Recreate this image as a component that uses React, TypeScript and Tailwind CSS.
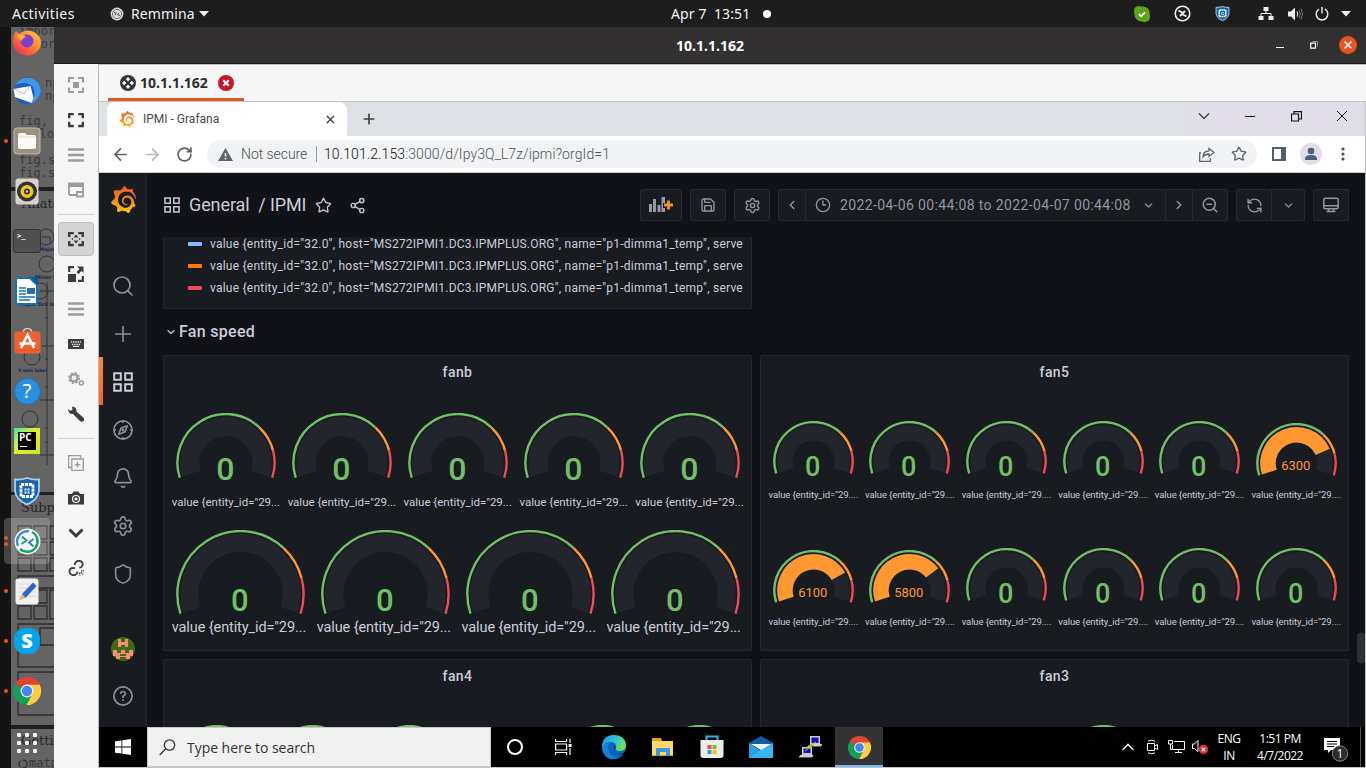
import React from "react";
import type { ReactNode } from "react";
import {
  ArrowLeft, ArrowRight, RotateCw, X, Plus, Search, Bell, Settings, Shield,
  Star, Share2, Save, ChevronLeft, ChevronRight, ChevronDown, ZoomOut, RefreshCw, Clock3,
} from "lucide-react";
import { SiGrafana } from "react-icons/si";

/* ---------- shared drawings ---------- */

function GrafanaMark({ size, id }: { size: number; id: string }) {
  return (
    <span className="relative block" style={{ width: size, height: size }}>
      <svg width="0" height="0" className="absolute">
        <defs>
          <linearGradient id={id} x1="0" y1="0" x2="0" y2="1">
            <stop offset="0" stopColor="#f05a28" />
            <stop offset="0.45" stopColor="#f58020" />
            <stop offset="1" stopColor="#fbca0a" />
          </linearGradient>
        </defs>
      </svg>
      <SiGrafana size={size} style={{ fill: `url(#${id})` }} />
    </span>
  );
}

function ChromeLogo({ size }: { size: number }) {
  return (
    <svg width={size} height={size} viewBox="0 0 48 48">
      <path d="M24 24 L3.2 12 A24 24 0 0 1 44.8 12 Z" fill="#dd4437" />
      <path d="M24 24 L44.8 12 A24 24 0 0 1 24 48 Z" fill="#ffcd40" />
      <path d="M24 24 L24 48 A24 24 0 0 1 3.2 12 Z" fill="#169d58" />
      <path d="M24 13 H45.3 L44 18 L33.5 29.5 Z" fill="#ffcd40" />
      <path d="M24 13 H45.3 A24 24 0 0 0 24 0 Z" fill="#dd4437" />
      <path d="M33.5 29.5 L23.5 48 L17 40 L24 34 Z" fill="#169d58" />
      <path d="M33.5 29.5 L23.5 48 H30 L40 36 Z" fill="#ffcd40" />
      <path d="M14.5 29.5 L3.8 11 L12 8 L15 20 Z" fill="#169d58" />
      <path d="M14.4 18.6 L3.8 11.2 L8 6 L24 13 Z" fill="#dd4437" />
      <circle cx="24" cy="24" r="11" fill="#f1f1f1" />
      <circle cx="24" cy="24" r="8.8" fill="#4285f4" />
    </svg>
  );
}

function ShieldLogo({ size }: { size: number }) {
  return (
    <svg width={size} height={size} viewBox="0 0 28 28">
      <path d="M2 2.5 Q8 3 14 1 Q20 3 26 2.5 V14 Q25 23 14 27.5 Q3 23 2 14 Z" fill="#1766ad" stroke="#a9d3f2" strokeWidth="1.8" />
      <path d="M8 7.500h12v12H8z" fill="none" stroke="#fff" strokeWidth="2.800" strokeDasharray="3.200 0.800" />
      <path d="M11.500 11.500h2v2h-2zM14.500 11.500h2v2h-2zM11.500 14.500h2v2h-2zM14.500 14.500h2v2h-2z" fill="#e6f2fb" />
    </svg>
  );
}

/* ---------- top bar ---------- */

function TopBar() {
  return (
    <header className="flex h-[27px] shrink-0 items-center bg-[#1d1d1d] font-['Noto_Sans',sans-serif] text-[14px] text-[#f2f2f2]">
      <span className="w-[97px] pl-3 tracking-[0.45px]">Activities</span>
      <svg className="ml-[13px]" width="14" height="14" viewBox="0 0 14 14">
        <circle cx="7" cy="7" r="6.4" fill="#d9d9d9" />
        <circle cx="7" cy="7" r="4.6" fill="none" stroke="#777" />
        <path d="M4 5.2l2.2 1L5 8M10 8.8l-2.2-1L9 6" fill="none" stroke="#666" strokeWidth="1.1" />
      </svg>
      <span className="ml-[7px] w-[68px] tracking-[0.1px]">Remmina</span>
      <svg width="10" height="6" viewBox="0 0 10 6"><path d="M0 0h10L5 5.5z" fill="#f2f2f2" /></svg>
      <span className="ml-[462px] w-[92px] whitespace-pre tracking-[0.1px]">Apr 7  13:51</span>
      <span className="h-2 w-2 rounded-full bg-white" />
      <div className="ml-[351px] flex items-center">
        <span className="flex w-10 justify-center">
          <svg width="16" height="16" viewBox="0 0 16 16">
            <path d="M4.5 0Q7 .5 9 .5 15.5 1 15.5 7.5 16 9 16 11.5 15.500 15.500 11 16 9 15.500 7 15.500 1 14.500.5 8.500 0 6.500 0 4 .5.5 4.500 0z" fill="#5ea51b" />
            <path d="M5 8.200l2.200 2.100 3.800-4" fill="none" stroke="#fff" strokeWidth="1.800" />
          </svg>
        </span>
        <span className="flex w-10 justify-center">
          <svg width="17" height="17" viewBox="0 0 17 17">
            <circle cx="8.500" cy="8.500" r="7.300" fill="none" stroke="#eee" strokeWidth="1.600" />
            <path d="M4.500 5.500l4.500 2.500-3 3M12.500 11.500L8 9l3-3" fill="none" stroke="#eee" strokeWidth="1.900" />
          </svg>
        </span>
        <span className="flex w-10 justify-center"><ShieldLogo size={15} /></span>
        <span className="flex w-[48px] justify-center">
          <svg width="16" height="14" viewBox="0 0 16 14" fill="#eee">
            <path d="M5.500 0h5v4h-5zM.5 9h5v4h-5zM10.500 9h5v4h-5z" />
            <path d="M8 4v3M3 9V6.500h10V9" fill="none" stroke="#eee" />
          </svg>
        </span>
        <svg className="ml-[-2px]" width="15" height="14" viewBox="0 0 15 14">
          <path d="M0 4.500h3L7 .5v13l-4-4H0z" fill="#eee" />
          <path d="M9 4.500q1.500 2.500 0 5" fill="none" stroke="#ccc" strokeWidth="1.300" />
          <path d="M11 3q2.500 4 0 8M13 1.500q3 5.500 0 11" fill="none" stroke="#777" />
        </svg>
        <svg className="ml-3" width="14" height="14" viewBox="0 0 14 14">
          <path d="M4 2.200a5.800 5.800 0 1 0 6 0M7 0v6.500" fill="none" stroke="#eee" strokeWidth="1.400" />
        </svg>
        <svg className="ml-3" width="10" height="6" viewBox="0 0 10 6"><path d="M0 0h10L5 5.500z" fill="#eee" /></svg>
      </div>
    </header>
  );
}

/* ---------- dock ---------- */

function DockBackdrop() {
  return (
    <svg className="absolute inset-y-0 left-[11px]" width="43" height="741" viewBox="11 27 43 741">
      <rect x="11" y="27" width="43" height="741" fill="#646464" />
      <rect x="11" y="187" width="43" height="4" fill="#202020" />
      <rect x="11" y="492" width="43" height="3" fill="#202020" />
      <rect x="11" y="725" width="43" height="4" fill="#202020" />
      <g fill="#3a3a3a" fontFamily="DejaVu Sans Mono, monospace" fontSize="12">
        <text x="19" y="35">import</text>
        <text x="19" y="48">import</text>
        <text x="45" y="87">np</text>
        <text x="45" y="100">np</text>
        <text x="19" y="125">fig, a</text>
        <text x="25" y="138">.plo</text>
        <text x="19" y="164">fig.sa</text>
        <text x="19" y="177">fig.sh</text>
        <text x="29" y="767">matp</text>
      </g>
      <g fill="#262626" fontFamily="DejaVu Serif, serif" fontSize="13">
        <text x="22" y="208">Anato</text>
        <text x="21" y="512">Subpl</text>
        <text x="21" y="745">Gettin</text>
      </g>
      <g fill="#22225a" fontFamily="DejaVu Sans, sans-serif" fontSize="5" fontWeight="bold">
        <text x="39" y="251">Major t</text>
        <text x="35" y="279">Minor ti</text>
        <text x="20" y="306">Major tick lab</text>
        <text x="18" y="372" fontSize="4.500">Y axis label</text>
      </g>
      <g fill="none" stroke="#333">
        <circle cx="46" cy="237" r="8" /><circle cx="47" cy="264" r="8" /><circle cx="40" cy="291" r="8" />
        <circle cx="32" cy="357" r="8" /><circle cx="30" cy="419" r="8" />
        <path d="M47 282v183M45 318h3M42 346h12M45 359h3M40 400h14M45 387h3M45 428h3M45 442h3M40 455h14M40 291h14M42 237h8v6" />
      </g>
      <g fill="none" stroke="#2d2d2d" strokeWidth="1.300">
        <path d="M18 526h13v13H18zM34 526h13v13H34zM50 526h13v13H50zM18 542h13v13H18zM34 542h13v13H34zM50 542h13v13H50zM18 558h13v13H18zM34 558h13v13H34zM50 558h13v13H50z" />
        <path d="M18 576h40v12H18zM18 590h13v13H18zM34 590h13v13H34zM18 606h13v13H18zM34 606h13v13H34zM50 590h13v29H50z" />
        <path d="M18 624h40v43H18zM40 628h20v17H40zM18 672h40v43H18z" />
        <circle cx="23" cy="764" r="4" strokeDasharray="7 2" />
      </g>
    </svg>
  );
}

const dockIcons: { dots: number; art: ReactNode }[] = [
  {
    dots: 0, art: (
      <svg width="30" height="30" viewBox="0 0 30 30">
        <defs><linearGradient id="ff" x1="1" y1="0" x2="0" y2="1"><stop offset="0" stopColor="#ffd63a" /><stop offset=".5" stopColor="#ff7a2e" /><stop offset="1" stopColor="#f0186c" /></linearGradient></defs>
        <path d="M4 5l3 3q7-6 15-2 7 4 7 11A14 13 0 0 1 1 16Q1 9 4 5z" fill="url(#ff)" />
        <circle cx="15" cy="15" r="6.500" fill="#7a3fd0" />
        <path d="M5 8q6 0 9 3-4 1-4 4l-4-3z" fill="#ffb02e" />
      </svg>
    ),
  },
  {
    dots: 0, art: (
      <svg width="30" height="30" viewBox="0 0 30 30">
        <circle cx="15.500" cy="15" r="13.500" fill="#1a5fc0" />
        <path d="M3 9Q9 0 19 2q9 3 10 13-2 10-10 13 6-11 2-17Q15 4 3 9z" fill="#3d96e8" />
        <path d="M1.500 13l17-3 3 12-2 5L3 21z" fill="#fafafa" /><path d="M2 13l10 5 6-8" fill="none" stroke="#c4c4c4" />
      </svg>
    ),
  },
  {
    dots: 1, art: (
      <svg width="28" height="28" viewBox="0 0 28 28">
        <rect x="1" y="1" width="26" height="26" rx="3" fill="#9a917f" stroke="#c4bcae" />
        <path d="M5 8q0-2 2-2h5l2 2h7q2 0 2 2v10q0 2-2 2H7q-2 0-2-2z" fill="#fbfaf8" /><path d="M5 10h18" stroke="#ddd" />
      </svg>
    ),
  },
  {
    dots: 0, art: (
      <svg width="24" height="27" viewBox="0 0 24 27">
        <rect x=".5" y=".5" width="23" height="26" rx="3" fill="#d6d3cd" />
        <circle cx="12" cy="13.500" r="10" fill="#333" /><circle cx="12" cy="13.500" r="6.500" fill="#f6c51c" /><circle cx="12" cy="13.500" r="3" fill="#333" /><circle cx="12" cy="13.500" r="1.200" fill="#ccc" />
      </svg>
    ),
  },
  {
    dots: 0, art: (
      <span className="flex h-[24px] w-[28px] rounded-[3px] border border-[#353535] bg-[#505050] pl-[3px] pt-[2px] font-['DejaVu_Sans_Mono',monospace] text-[7px] font-bold leading-[8px] text-white">&gt;_</span>
    ),
  },
  {
    dots: 0, art: (
      <svg width="24" height="28" viewBox="0 0 24 28">
        <path d="M2.500 1H15l7 7v17.500q0 1.500-1.500 1.500h-18Q1 27 1 25.500v-23Q1 1 2.500 1z" fill="#fff" stroke="#1173b6" strokeWidth="2" /><path d="M15 0h8v8z" fill="#0b5b92" />
        <path d="M4 11h7M4 14h7M4 17h7M4 20h16M4 23h11" stroke="#1173b6" strokeWidth="1.400" /><path d="M12 11h8v6h-8z" fill="#2b6d9e" />
      </svg>
    ),
  },
  {
    dots: 0, art: (
      <svg width="27" height="28" viewBox="0 0 27 28">
        <path d="M9 7q0-5.500 4.500-5.500T18 7" fill="none" stroke="#e0cfa8" strokeWidth="1.500" />
        <rect x=".5" y="4.500" width="26" height="22" rx="2.500" fill="#ef6230" /><path d="M1 23h25" stroke="#d94f20" />
        <path d="M7 21l6.500-13L20 21M5.500 16.500h16" fill="none" stroke="#fff" strokeWidth="2.600" />
      </svg>
    ),
  },
  {
    dots: 0, art: (
      <span className="flex h-[27px] w-[27px] items-center justify-center rounded-full border border-[#1d74b8] bg-[#2a8fdc] font-['Noto_Sans',sans-serif] text-[20px] leading-none text-white">?</span>
    ),
  },
  {
    dots: 0, art: (
      <span className="flex h-[26px] w-[26px] bg-gradient-to-br from-[#21e88d] via-[#e9ee22] to-[#c5e32b] p-[4px]">
        <span className="flex h-[18px] w-[18px] flex-col bg-black font-['Open_Sans',sans-serif] text-[10px] font-bold leading-[11px] text-white">
          <span className="pl-px">PC</span><span className="ml-[2px] mt-[3px] h-px w-[7px] bg-white" />
        </span>
      </span>
    ),
  },
  { dots: 0, art: <ShieldLogo size={28} /> },
  {
    dots: 2, art: (
      <svg width="27" height="27" viewBox="0 0 27 27">
        <circle cx="13.500" cy="13.500" r="13" fill="#f6f6f4" />
        <path d="M4 18A10.500 10.500 0 0 1 15 3.300" fill="none" stroke="#3e8ed8" strokeWidth="2.500" />
        <path d="M18 4A10.500 10.500 0 1 1 6 21" fill="none" stroke="#1aa06d" strokeWidth="2.500" />
        <path d="M8 8.500l4.500 4-5 3.500" fill="none" stroke="#1aa06d" strokeWidth="2" /><path d="M19.500 11l-4.500 3.500 4.500 4" fill="none" stroke="#3e7ed0" strokeWidth="2" />
      </svg>
    ),
  },
  {
    dots: 1, art: (
      <svg width="24" height="27" viewBox="0 0 24 27">
        <rect x=".5" y=".5" width="23" height="26" rx="3" fill="#f1f1f1" /><path d="M3 6h18M3 10h18M3 14h18M3 18h18" stroke="#d8d8d8" />
        <path d="M7 16L18 4.500l3.500 3.500L10.500 20z" fill="#2f62d0" /><path d="M7 16l3.500 4L4 22.500z" fill="#e7b07a" />
      </svg>
    ),
  },
  {
    dots: 1, art: (
      <span className="flex h-[26px] w-[26px] items-center justify-center rounded-[11px] bg-[#00a5ea] font-['Open_Sans',sans-serif] text-[20px] font-extrabold leading-none text-white">S</span>
    ),
  },
  { dots: 1, art: <ChromeLogo size={28} /> },
];

function Dock() {
  return (
    <aside className="relative h-[741px] w-[54px] shrink-0 overflow-hidden bg-[#141414]">
      <DockBackdrop />
      <div className="relative mt-[-11px] flex flex-col">
        {dockIcons.map((d, i) => (
          <div key={i} className="flex h-[50px] items-center">
            <div className={d.dots === 2 ? "ml-[4px] flex h-[46px] w-[46px] items-center rounded-[4px] bg-white/20" : "ml-[4px] flex h-[46px] w-[46px] items-center"}>
              <span className="flex w-[5px] flex-col items-end gap-[2px]">
                {Array.from({ length: d.dots }, (_, k) => <i key={k} className="mr-[1px] h-1 w-1 rounded-full bg-[#e95420]" />)}
              </span>
              <span className="flex w-[36px] justify-center">{d.art}</span>
            </div>
          </div>
        ))}
        <div className="ml-[17px] mt-[17px] grid w-5 grid-cols-3 gap-[4px]">
          {Array.from({ length: 9 }, (_, k) => <i key={k} className="h-[4px] w-[4px] rounded-[1px] bg-[#f2f2f2]" />)}
        </div>
      </div>
    </aside>
  );
}

/* ---------- Remmina toolbar ---------- */

const D = "#3c3c3c";
const G = "#9c9c9c";
const lines = <path d="M0 2.500h16M0 8h16M0 13.500h16" stroke={G} strokeWidth="2.400" fill="none" />;

const toolArt: (ReactNode | null)[] = [
  <><path d="M1 5.500V1h5M10 1h5v4.500M15 10.500V15h-5M6 15H1v-4.500" fill="none" stroke={G} strokeWidth="2.200" /><path d="M5 5h6v6H5z" fill={G} /></>,
  <path d="M1.200 6.300V2.200h4.600M10.200 2.200h4.600v4.100M14.800 9.700V14h-4.600M5.800 14H1.200V9.700" fill="none" stroke={D} strokeWidth="2.300" />,
  lines,
  <><path d="M1 13V1.500h14V9M1 13h7" fill="none" stroke={G} strokeWidth="1.800" /><path d="M0 1h16v4H0z" fill={G} /><path d="M9 10h6v4.500H9z" fill="none" stroke={G} strokeWidth="1.800" /></>,
  null,
  <><path d="M1.200 6V2.200h4.600M10.200 2.200h4.600V6M14.800 10v4h-4.600M5.800 14H1.200v-4" fill="none" stroke={D} strokeWidth="2.300" /><path d="M8 3.500L10.500 6.500h-5zM8 12.500l2.500-3h-5zM3.500 8L5 6.700v2.600zM12.500 8L11 6.700v2.600z" fill={D} /></>,
  <><path d="M1.200 6V1.200H6M14.800 10v4.800H10" fill="none" stroke={D} strokeWidth="2.200" /><path d="M0 8h8v8H0zM9 .5h6.500V7l-2-2-3 3-2-2 3-3z" fill={D} /></>,
  lines,
  <><path d="M0 3h16v10H0z" fill={D} /><path d="M3 6h10M4 8.500h8" stroke="#eee" strokeWidth="1.300" strokeDasharray="1.300 .9" /><path d="M5 10.500h6" stroke="#eee" /></>,
  <><circle cx="6" cy="7" r="3.600" fill="none" stroke={G} strokeWidth="2.400" /><circle cx="6" cy="7" r="5.300" fill="none" stroke={G} strokeWidth="1.400" strokeDasharray="2.200 1.960" /><circle cx="13.300" cy="12" r="2" fill="none" stroke={G} strokeWidth="1.500" /></>,
  <path d="M4 .6l.6 3-2.300 1.500L0 3q0 5 5 5l7 7q2 1.500 3.500 0t0-3.300l-7-6Q9 1 4 .6z" fill={D} />,
  null,
  <><path d="M3 12.500H.6V.7h12V3" fill="none" stroke={G} strokeWidth="1.300" /><path d="M3.800 4h11.500v11.300H3.800z" fill="none" stroke={G} strokeWidth="1.300" /><path d="M9.500 6.800v5.600M6.700 9.600h5.600" stroke={G} strokeWidth="1.400" /></>,
  <><path d="M0 4h4l1.500-2.500h5L12 4h4v10.500H0z" fill={D} /><circle cx="8" cy="9" r="3.500" fill="none" stroke="#f6f6f6" strokeWidth="1.200" /><circle cx="8" cy="9" r="1.600" fill="#f6f6f6" /></>,
  <path d="M1.500 4.500L8 11l6.500-6.500" fill="none" stroke={D} strokeWidth="3" />,
  <><path d="M7 5q-.5-2 1.500-3.500Q11 0 13.500 1.700q2.200 2.500.3 4.800-1 1.200-2.500 1.200M9.500 11.500q-.3 2.500-2.300 3.300-2.500 1-4.700-.8-2-2.500-.2-5Q4.500 7.300 7 8.500" fill="none" stroke={D} strokeWidth="1.800" /><path d="M11.500 12.500l.4 3M13 10.800h3M12.800 12.300l2.400 2.200" stroke={D} strokeWidth="1.200" strokeDasharray="1.500 .6" /></>,
];

function RemminaTools() {
  return (
    <aside className="flex w-[45px] shrink-0 flex-col border-r border-[#b9b9b9] bg-[#f6f6f6] pt-[3px]">
      {toolArt.map((a, i) =>
        a === null ? (
          <div key={i} className="mx-1 flex h-[14px] items-center"><span className="h-px w-full bg-[#d3d3d3]" /></div>
        ) : (
          <div key={i} className="flex h-[35px] items-center justify-center">
            <span className={i === 5 ? "flex h-[34px] w-[36px] items-center justify-center rounded-[4px] border border-[#bdbdbd] bg-[#d4d4d4]" : "flex h-[34px] w-[36px] items-center justify-center"}>
              <svg width="16" height="16" viewBox="0 0 16 16">{a}</svg>
            </span>
          </div>
        )
      )}
    </aside>
  );
}

/* ---------- browser ---------- */

function ChromeFrame() {
  return (
    <>
      <div className="flex h-[34px] shrink-0 bg-[#dee1e6]">
        <div className="ml-2 flex w-[240px] items-center rounded-t-[8px] bg-white pl-[12px] font-[Roboto,sans-serif] text-[12px] text-[#45494d]">
          <GrafanaMark size={16} id="gt" />
          <span className="ml-2 w-[181px] tracking-[0px]">IPMI - Grafana</span>
          <X size={13} strokeWidth={2.600} />
        </div>
        <div className="ml-[14px] flex items-center text-[#3c4043]"><Plus size={16} strokeWidth={2.500} /></div>
        <div className="ml-auto flex w-[178px] items-center bg-[#e1dee9] pb-[6px] text-black">
          <svg className="ml-[11px]" width="12" height="7" viewBox="0 0 12 7"><path d="M1 .5l5 5 5-5" fill="none" stroke="#333" strokeWidth="1.200" /></svg>
          <span className="ml-[35px] h-px w-[10px] bg-black" />
          <svg className="ml-[36px]" width="11" height="11" viewBox="0 0 11 11"><path d="M.5 3h7v7h-7zM3 3V.7h7.500V8H8" fill="none" stroke="#111" strokeWidth="1.200" /></svg>
          <svg className="ml-[34px]" width="12" height="12" viewBox="0 0 12 12"><path d="M1 1l10 10M11 1L1 11" stroke="#111" /></svg>
        </div>
      </div>
      <div className="flex h-[37px] shrink-0 items-center border-b border-[#cfd1d4] bg-white text-[#5f6368]">
        <ArrowLeft className="ml-[12px]" size={19} strokeWidth={2.200} />
        <ArrowRight className="ml-[13px] text-[#b6b8bb]" size={19} strokeWidth={2.200} />
        <RotateCw className="ml-[14px]" size={17} strokeWidth={2.500} />
        <div className="ml-[14px] flex h-[28px] w-[1050px] items-center rounded-full bg-[#f1f3f4] pl-[11px] font-[Roboto,sans-serif] text-[14px]">
          <svg width="15" height="13" viewBox="0 0 15 13"><path d="M7.500 0L15 13H0z" fill="#5f6368" /><path d="M7.500 5v3.500M7.500 10v1.500" stroke="#fff" strokeWidth="1.600" /></svg>
          <span className="ml-[8px] w-[74px] whitespace-nowrap font-light tracking-[-0.05px] text-[#4b4f54]">Not secure</span>
          <span className="ml-[1px] h-4 w-px bg-[#9a9da1]" />
          <span className="ml-[7px] font-light tracking-[0.1px] text-[#4e5257]"><b className="font-light text-[#111]">10.101.2.153</b>:3000/d/Ipy3Q_L7z/ipmi?orgId=1</span>
          <svg className="ml-auto" width="16" height="15" viewBox="0 0 16 15"><path d="M2 6H.7v8.300h10.600V11" fill="none" stroke="#5f6368" strokeWidth="1.300" /><path d="M10 1.500l5 4-5 4V7Q6 7 4 10q0-6 6-6.200z" fill="none" stroke="#5f6368" strokeWidth="1.300" /></svg>
          <Star className="ml-[16px] mr-[10px]" size={16} strokeWidth={2} />
        </div>
        <svg className="ml-[15px]" width="14" height="14" viewBox="0 0 14 14"><path d="M1 1h12v12H1z" fill="#fff" stroke="#53606b" strokeWidth="2" /><path d="M9 0h5v14H9z" fill="#53606b" /></svg>
        <svg className="ml-[14px]" width="22" height="22" viewBox="0 0 22 22"><circle cx="11" cy="11" r="11" fill="#e1dee9" /><circle cx="11" cy="8" r="3.300" fill="#4f5f80" /><path d="M5 17v-2q1-3 6-3t6 3v2z" fill="#4f5f80" /></svg>
        <svg className="ml-[19px]" width="4" height="14" viewBox="0 0 4 14" fill="#4a4e52"><circle cx="2" cy="2" r="1.600" /><circle cx="2" cy="7" r="1.600" /><circle cx="2" cy="12" r="1.600" /></svg>
      </div>
    </>
  );
}

/* ---------- Grafana ---------- */

function SideItem({ children }: { children: ReactNode }) {
  return <div className="flex h-12 items-center justify-center">{children}</div>;
}

function GridIcon({ size }: { size: number }) {
  return <svg width={size} height={size} viewBox="0 0 20 20"><path d="M1.200 1.200h6.600v6.600H1.200zM12.200 1.200h6.600v6.600h-6.600zM1.200 12.200h6.600v6.600H1.200zM12.200 12.200h6.600v6.600h-6.600z" fill="none" stroke="currentColor" strokeWidth="2" /></svg>;
}

function CompassIcon() {
  return (
    <svg width="20" height="20" viewBox="0 0 20 20" fill="none" stroke="currentColor" strokeWidth="1.600">
      <circle cx="10" cy="10" r="9.100" />
      <path d="M14.200 5.800l-2 6-6.400 2.400 2-6zM10 1v2M10 17v2M1 10h2M17 10h2" strokeLinejoin="round" />
      <circle cx="10" cy="10" r="0.700" />
    </svg>
  );
}

function GrafanaSidebar() {
  return (
    <nav className="flex w-[48px] shrink-0 flex-col border-r border-[#22252b] bg-[#181b1f] text-[#8e8f9b]">
      <div className="flex h-[52px] items-center justify-center pl-px"><GrafanaMark size={27} id="gs" /></div>
      <div className="mt-[37px]">
        <SideItem><Search size={24} strokeWidth={1.700} /></SideItem>
        <div className="flex h-12 items-center justify-center">
          <svg width="16" height="16" viewBox="0 0 16 16"><path d="M8 0v16M0 8h16" stroke="currentColor" strokeWidth="1.600" /></svg>
        </div>
        <div className="flex h-12 items-center text-[#ccccdc]">
          <span className="mb-[2px] h-12 w-1 bg-gradient-to-b from-[#ff8833] to-[#f55f3e]" />
          <span className="ml-[10px]"><GridIcon size={20} /></span>
        </div>
        <SideItem><CompassIcon /></SideItem>
        <SideItem><Bell size={22} strokeWidth={1.800} /></SideItem>
        <SideItem><Settings size={22} strokeWidth={1.800} /></SideItem>
        <SideItem><Shield size={22} strokeWidth={1.700} /></SideItem>
      </div>
      <div className="mt-[39px] flex justify-center">
        <svg width="24" height="24" viewBox="0 0 24 24">
          <defs><clipPath id="av"><circle cx="12" cy="12" r="12" /></clipPath></defs>
          <g clipPath="url(#av)"><path d="M0 0h24v24H0z" fill="#3f6b12" /><path d="M7 2h3v3h4V2h3v8h-3V8h-4v2H7zM2 13h4v3h4v-3h4v3h4v-3h4v6h-3v3H5v-3H2z" fill="#fb8a76" /><path d="M9 17h6v2H9zM9 20h6v2H9z" fill="#3f6b12" /></g>
        </svg>
      </div>
      <div className="mt-[25px] flex justify-center">
        <svg width="20" height="20" viewBox="0 0 20 20" fill="none" stroke="currentColor" strokeWidth="1.700"><circle cx="10" cy="10" r="9.100" /><path d="M7.500 7.700Q8 5.500 10 5.500t2.500 2Q12.500 9 10 10.200V12M10 13.500v1.600" /></svg>
      </div>
    </nav>
  );
}

const btn = "flex h-[32px] items-center justify-center rounded-[2px] border border-[#27292e] bg-[#181b1f]";

function DashHeader() {
  return (
    <div className="flex h-[64px] shrink-0 items-center pl-[17px] pr-[16px] text-[#9495a1]">
      <span className="text-[#c3c3d2]"><GridIcon size={16} /></span>
      <span className="ml-[9px] w-[126px] whitespace-nowrap pb-px text-[18px] tracking-[-0.1px] text-[#ccccdc]">General&nbsp; / IPMI</span>
      <Star className="text-[#c3c3d2]" size={17} strokeWidth={1.900} />
      <Share2 className="ml-[17px] text-[#c3c3d2]" size={17} strokeWidth={2} />
      <div className="ml-auto flex gap-2">
        <div className={`${btn} w-[42px]`}>
          <svg width="26" height="16" viewBox="0 0 26 16"><path d="M1 7h3v8H1zM5 2h3v13H5zM9.500 8h3v7h-3zM13.500 0h3.500v15h-3.500z" fill="#9899a4" /><path d="M15 6h4V2h4v4h3v5h-3v3h-4v-3h-4z" fill="#181b1f" /><path d="M20.500 3.500v9M16 8h9" stroke="#f5902b" strokeWidth="2.800" /></svg>
        </div>
        <div className={`${btn} w-[36px]`}><Save size={16} strokeWidth={2.100} /></div>
        <div className={`${btn} w-[36px]`}><Settings size={17} strokeWidth={2} /></div>
        <div className="flex h-[32px] w-[450px] items-center rounded-[2px] border border-[#27292e] bg-[#181b1f]">
          <span className="flex h-full w-[27px] items-center justify-center border-r border-[#27292e]"><ChevronLeft size={14} strokeWidth={2.400} /></span>
          <span className="flex h-full w-[360px] items-center border-r border-[#27292e] pl-[9px] text-[14px] tracking-[0.36px]">
            <Clock3 size={16} strokeWidth={2} />
            <span className="ml-[9px] w-[302px] whitespace-nowrap">2022-04-06 00:44:08 to 2022-04-07 00:44:08</span>
            <ChevronDown size={13} strokeWidth={2.400} />
          </span>
          <span className="flex h-full w-[27px] items-center justify-center border-r border-[#27292e]"><ChevronRight size={14} strokeWidth={2.400} /></span>
          <span className="flex flex-1 justify-center"><ZoomOut size={18} strokeWidth={2} /></span>
        </div>
        <div className="flex h-[32px] w-[69px] items-center rounded-[2px] border border-[#27292e] bg-[#181b1f]">
          <span className="flex h-full w-[35px] items-center justify-center border-r border-[#27292e]"><RefreshCw className="-scale-x-100" size={17} strokeWidth={2} /></span>
          <span className="flex flex-1 justify-center"><ChevronDown size={13} strokeWidth={2.400} /></span>
        </div>
        <div className={`${btn} w-[36px]`}>
          <svg width="16" height="16" viewBox="0 0 16 16" fill="none" stroke="currentColor" strokeWidth="1.500"><rect x=".8" y="1.300" width="14.400" height="10.400" rx="1.500" /><path d="M1 8.700h14M5.500 12v2.500h5V12M3.500 14.500h9" /></svg>
        </div>
      </div>
    </div>
  );
}

const LIMIT = 7810;

function arc(cx: number, cy: number, r: number, from: number, to: number) {
  const p = (f: number) => {
    const a = ((198 - 216 * f) * Math.PI) / 180;
    return `${(cx + r * Math.cos(a)).toFixed(2)} ${(cy - r * Math.sin(a)).toFixed(2)}`;
  };
  const large = (to - from) * 216 > 180 ? 1 : 0;
  return `M${p(from)}A${r} ${r} 0 ${large} 1 ${p(to)}`;
}

type GaugeProps = { value: number; r: number; thick: number; font: number; textY: number };

function Gauge({ value, r, thick, font, textY }: GaugeProps) {
  const w = Math.ceil(r * 2) + 2;
  const h = Math.ceil(r * 1.32) + 4;
  const cx = w / 2;
  const cy = r;
  const mid = r - 4 - thick / 2;
  const ring = r - 1.1;
  return (
    <svg width={w} height={h} viewBox={`0 0 ${w} ${h}`} fill="none" className="block shrink-0">
      <path d={arc(cx, cy, mid, 0, 1)} stroke="#22252b" strokeWidth={thick} />
      {value > 0 && <path d={arc(cx, cy, mid, 0, value / LIMIT)} stroke="#ff9830" strokeWidth={thick} />}
      <path d={arc(cx, cy, ring, 0, 0.7)} stroke="#73bf69" strokeWidth="2.400" />
      <path d={arc(cx, cy, ring, 0.7, 0.85)} stroke="#ff9830" strokeWidth="2.400" />
      <path d={arc(cx, cy, ring, 0.85, 1)} stroke="#f2495c" strokeWidth="2.400" />
      <text x={cx - 0.7} y={textY} textAnchor="middle" fontFamily="Roboto, sans-serif" fontSize={value > 0 ? 13 : font} fontWeight={value > 0 ? 400 : 500} fill={value > 0 ? "#ff9830" : "#73bf69"}>
        {value}
      </text>
    </svg>
  );
}

const LABEL = 'value {entity_id="29...';
const SHORT_LABEL = 'value {entity_id="29....';
const panel = "w-[589px] shrink-0 overflow-hidden rounded-[2px] border border-[#25272c] bg-[#181b1f]";
const panelTitle = "flex h-[32px] items-center justify-center text-[14px] font-medium tracking-[0.4px] text-[#ccccdc]";

function Fanb() {
  return (
    <section className={`${panel} h-[296px]`}>
      <h2 className={panelTitle}>fanb</h2>
      <div className="ml-[4px] mt-[25px] flex h-[117px]">
        {[0, 0, 0, 0, 0].map((v, i) => (
          <div key={i} className="flex w-[115.900px] shrink-0 flex-col items-center">
            <Gauge value={v} r={49.7} thick={19.3} font={32} textY={66.5} />
            <span className="mt-[11px] whitespace-nowrap text-[11.500px] leading-[16px] text-[#ccccdc]">{LABEL}</span>
          </div>
        ))}
      </div>
      <div className="ml-[4px] flex">
        {[0, 0, 0, 0].map((v, i) => (
          <div key={i} className="flex w-[144.900px] shrink-0 flex-col items-center">
            <Gauge value={v} r={64.2} thick={18} font={31} textY={81} />
            <span className="mr-[3px] mt-[-1.500px] whitespace-nowrap text-[14.500px] leading-[20px] tracking-[-0.1px] text-[#ccccdc]">{LABEL}</span>
          </div>
        ))}
      </div>
    </section>
  );
}

function FanRow({ values }: { values: number[] }) {
  return (
    <div className="ml-[4px] flex h-[127px]">
      {values.map((v, i) => (
        <div key={i} className="flex w-[96.600px] shrink-0 flex-col items-center">
          <span className={v > 0 ? "flex h-[66px] pt-[2px]" : "flex h-[66px]"}>
            <Gauge value={v} r={40.3} thick={15.5} font={27} textY={v > 0 ? 46.5 : 55} />
          </span>
          <span className="whitespace-nowrap text-[9.500px] leading-[16px] tracking-[-0.1px] text-[#ccccdc]">{SHORT_LABEL}</span>
        </div>
      ))}
    </div>
  );
}

function CutPanel({ title, shown }: { title: string; shown: boolean[] }) {
  return (
    <section className={`${panel} h-[296px]`}>
      <h2 className={panelTitle}>{title}</h2>
      <div className="ml-[4px] mt-[32.500px] flex">
        {shown.map((s, i) => (
          <div key={i} className="flex w-[96.600px] shrink-0 justify-center">
            {s && <Gauge value={0} r={40.3} thick={15.5} font={27} textY={55} />}
          </div>
        ))}
      </div>
    </section>
  );
}

const legendColors = ["bg-[#8ab8ff]", "bg-[#ff780a]", "bg-[#f2495c]"];

function Dashboard() {
  return (
    <div className="flex min-w-0 flex-1 flex-col overflow-hidden bg-[#111217] font-[Roboto,sans-serif]">
      <DashHeader />
      <div className="flex min-h-0 flex-1 overflow-hidden">
        <div className="ml-[16px] flex w-[1186px] shrink-0 flex-col">
          <div className="flex h-[72px] w-[589px] shrink-0 flex-col rounded-b-[2px] border border-t-0 border-[#25272c] bg-[#181b1f] pl-[24px] pr-[8px]">
            <div className="mt-[-4px]">
              {legendColors.map((color) => (
                <div key={color} className="flex h-[22px] items-center">
                  <span className={`h-[4px] w-[14px] shrink-0 rounded-[1px] ${color}`} />
                  <span className="ml-[8px] flex-1 overflow-hidden whitespace-nowrap text-[12px] tracking-[0.23px] text-[#ccccdc]">
                    {'value {entity_id="32.0", host="MS272IPMI1.DC3.IPMPLUS.ORG", name="p1-dimma1_temp", server'}
                  </span>
                </div>
              ))}
            </div>
          </div>
          <div className="flex h-[46px] shrink-0 items-center pl-[2px] text-[#ccccdc]">
            <ChevronDown size={12} strokeWidth={2.200} />
            <span className="ml-[2px] text-[16px] font-medium tracking-[0.3px]">Fan speed</span>
          </div>
          <div className="flex gap-2">
            <Fanb />
            <section className={`${panel} h-[296px]`}>
              <h2 className={panelTitle}>fan5</h2>
              <div className="mt-[33px]"><FanRow values={[0, 0, 0, 0, 0, 6300]} /><FanRow values={[6100, 5800, 0, 0, 0, 0]} /></div>
            </section>
          </div>
          <div className="mt-2 flex gap-2">
            <CutPanel title="fan4" shown={[true, true, true, false, true, true]} />
            <CutPanel title="fan3" shown={[false, false, false, true, false, false]} />
          </div>
        </div>
        <div className="ml-auto mt-[396px] h-[30px] w-[8px] rounded-[3px] bg-[#2f3036]" />
      </div>
    </div>
  );
}

/* ---------- Windows taskbar ---------- */

const winApps: ReactNode[] = [
  <svg width="26" height="26" viewBox="0 0 26 26">
    <defs><linearGradient id="ed" x1="0" y1="0" x2="1" y2=".4"><stop offset="0" stopColor="#2196e8" /><stop offset=".6" stopColor="#30c5cf" /><stop offset="1" stopColor="#6fe05a" /></linearGradient></defs>
    <circle cx="13" cy="13" r="12" fill="#0c63bd" /><path d="M1 12Q2 1 13 1t12 10q0 6-7 6-4 0-3-3 1-6-5-6-6 0-9 6z" fill="url(#ed)" />
    <path d="M1 13q3-6 9-5-5 3-2 10 3 5 9 6-9 4-14-4-2-3-2-7z" fill="#1580d8" /><path d="M14 13q-2 5 2 7 4 1 8-2l.5-1.500 1.500 2-2 3-2-1.500q-5 1.500-8-1.500-2-4 0-7.500z" fill="#000" />
  </svg>,
  <svg width="22" height="20" viewBox="0 0 22 20"><path d="M0 1h9l1 3h11v15H0z" fill="#e8a20c" /><path d="M0 4h21v14H0z" fill="#ffd76a" /><path d="M4 11h14v8h-4v-4H8v4H4z" fill="#3a96dd" /></svg>,
  <svg width="24" height="24" viewBox="0 0 24 24"><path d="M6.500 6V1.500h11V6" fill="none" stroke="#2cb7ec" strokeWidth="2" /><path d="M.5 5h23v15q0 3-3 3h-17q-3 0-3-3z" fill="#ececec" /><path d="M7.500 10h4v4h-4z" fill="#f04f24" /><path d="M12.500 10h4v4h-4z" fill="#80b92a" /><path d="M7.500 15h4v4h-4z" fill="#1ca1e6" /><path d="M12.500 15h4v4h-4z" fill="#fcb813" /></svg>,
  <svg width="24" height="24" viewBox="0 0 24 24"><path d="M0 8l12-7 12 7v3H0z" fill="#0c5fa8" /><path d="M2 9h20l-9 7z" fill="#f2f2f2" /><path d="M0 8l12 8L24 8v15H0z" fill="#2aa0e8" /><path d="M0 23l12-8 12-7v15z" fill="#37b6f4" /></svg>,
  <svg width="24" height="24" viewBox="0 0 24 24"><path d="M12 1h10v9H12zM4 12h10v8H4z" fill="#ccc" /><path d="M13.500 2.500h7v5.500h-7zM5.500 13.500h7V18h-7z" fill="#1010c0" /><path d="M10 11h13l1-2M1 22h13l1-2H3z" fill="#ddd" stroke="#bbb" /><path d="M18 7l-7 4h3l-7 5 5-4H9z" fill="#ff0" stroke="#bb0" strokeWidth=".6" /></svg>,
];

function Taskbar() {
  return (
    <div className="flex h-[40px] shrink-0 items-stretch bg-black font-['Open_Sans',sans-serif] text-white">
      <div className="flex w-[48px] items-center justify-center">
        <svg width="16" height="16" viewBox="0 0 16 16" fill="#fff"><path d="M0 2.300l6.500-.9v6.100H0zM7.300 1.300L16 0v7.500H7.300zM0 8.400h6.500v6.200L0 13.700zM7.300 8.400H16V16l-8.700-1.300z" /></svg>
      </div>
      <div className="flex w-[344px] items-center border border-[#c9c9c9] bg-[#f1f1f1] pl-[11px] text-[#333]">
        <svg width="17" height="17" viewBox="0 0 17 17" fill="none" stroke="#333" strokeWidth="1.300"><circle cx="10.500" cy="6" r="5.200" /><path d="M6.700 9.700L.7 16" /></svg>
        <span className="ml-[11px] whitespace-nowrap text-[14px] tracking-[-0.04px]">Type here to search</span>
      </div>
      <div className="flex w-[48px] items-center justify-center"><span className="h-[16px] w-[16px] rounded-full border-2 border-white" /></div>
      <div className="flex w-[48px] items-center justify-center">
        <svg width="17" height="16" viewBox="0 0 17 16" fill="none" stroke="#fff" strokeWidth="1.200"><path d="M.6 0v2.500h11V0M.6 16v-2.500h11V16M.6 5h11v6H.6zM15 0v4M15 9v7" /><path d="M13.600 5h3v3h-3z" fill="#fff" stroke="none" /></svg>
      </div>
      <div className="ml-[2px] flex">{winApps.map((a, i) => <div key={i} className="flex w-[49px] items-center justify-center">{a}</div>)}</div>
      <div className="ml-px flex w-[48px] items-center justify-center border-b-2 border-[#76b9ed] bg-[#343434] pt-[2px]"><ChromeLogo size={23} /></div>
      <div className="ml-auto flex items-center">
        <svg width="12" height="8" viewBox="0 0 12 8"><path d="M.7 7L6 1.200 11.300 7" fill="none" stroke="#fff" strokeWidth="1.300" /></svg>
        <svg className="ml-[13px]" width="11" height="16" viewBox="0 0 11 16" fill="none" stroke="#fff"><path d="M.5 4.500h7v7h-7zM7.500 7l3-1.500v5L7.500 9M1 2.200Q4.500.2 8 2.200M1 13.800q3.500 2 7 0" /></svg>
        <svg className="ml-[10px]" width="17" height="14" viewBox="0 0 17 14" fill="none" stroke="#fff"><path d="M6 1.500h10.500v8H4.500V5M10.500 9.500v3M7 12.500h7M.5.5h4v3.500h-4zM2.500 4v5.500H4" /></svg>
        <svg className="ml-[7px]" width="17" height="16" viewBox="0 0 17 16"><path d="M.5 5h2L6 1.500v11L2.500 9.500h-2z" fill="none" stroke="#fff" /><circle cx="11.500" cy="10.500" r="4.700" fill="#e22b2f" /><path d="M9.700 8.700l3.600 3.600M13.300 8.700l-3.600 3.600" stroke="#fff" strokeWidth="1.200" /></svg>
        <div className="ml-[7px] flex w-[26px] flex-col items-center text-[12px] leading-[17px] tracking-[-0.500px]"><span>ENG</span><span>IN</span></div>
        <div className="ml-[12px] flex w-[52px] flex-col items-center whitespace-nowrap text-[12px] leading-[17px] tracking-[-0.500px]"><span>1:51 PM</span><span>4/7/2022</span></div>
        <div className="ml-[18px] flex w-[25px] pt-[3px]">
          <svg width="25" height="26" viewBox="0 0 25 26"><path d="M0 2h16v12H7l-3 3v-3H0z" fill="#fff" /><path d="M3 5.500h10M3 8h10M3 10.500h7" stroke="#000" /><circle cx="16" cy="17.500" r="7.700" fill="#2d2d2d" stroke="#888" /><text x="16" y="22" textAnchor="middle" fontSize="12" fill="#fff">1</text></svg>
        </div>
        <span className="ml-[11px] mr-[4px] h-[40px] w-px bg-[#555]" />
      </div>
    </div>
  );
}

export default function App() {
  return (
    <div className="flex h-[768px] w-[1366px] flex-col overflow-hidden bg-black">
      <TopBar />
      <div className="flex min-h-0 flex-1">
        <Dock />
        <div className="flex min-w-0 flex-1 flex-col">
          <div className="flex h-[37px] shrink-0 items-center border-b border-[#1c1b1b] bg-[#323030] pr-[9px] font-['Noto_Sans',sans-serif]">
            <span className="flex-1 text-center text-[14px] font-bold tracking-[0px] text-white"><span className="ml-[90px]">10.1.1.162</span></span>
            <span className="mt-[4px] h-px w-[8px] bg-white" />
            <svg className="ml-[26px] mr-[21px]" width="8" height="8" viewBox="0 0 8 8"><path d="M.7 2.200h4.800v5H.7z" fill="none" stroke="#fff" strokeWidth="1.200" /><path d="M2.500.5h5v5" fill="none" stroke="#999" /></svg>
            <svg width="18" height="18" viewBox="0 0 18 18"><circle cx="9" cy="9" r="9" fill="#e95420" /><path d="M5.500 5.500l7 7M12.500 5.500l-7 7" stroke="#fff" strokeWidth="1.600" /></svg>
          </div>
          <div className="flex min-h-0 flex-1">
            <RemminaTools />
            <div className="flex min-w-0 flex-1 flex-col">
              <div className="flex h-[38px] shrink-0 border-b border-t border-[#c2c2c2] bg-[#f6f6f6] pl-[9px] font-['Noto_Sans',sans-serif]">
                <div className="flex w-[136px] items-center border-b-[3px] border-[#e95420] pl-[12px] pt-[2px]">
                  <svg width="16" height="16" viewBox="0 0 16 16"><circle cx="8" cy="8" r="8" fill="#333" /><path d="M8 2l2.200 2.200L8 6.400 5.800 4.200zM8 9.600l2.200 2.200L8 14l-2.200-2.200zM2 8l2.200-2.200L6.400 8l-2.200 2.200zM9.600 8l2.200-2.200L14 8l-2.200 2.200z" fill="#f6f6f6" /></svg>
                  <span className="ml-[4px] w-[78px] text-[14px] font-bold tracking-[0px] text-[#2d2d2d]">10.1.1.162</span>
                  <svg width="16" height="16" viewBox="0 0 16 16"><circle cx="8" cy="8" r="8" fill="#c7162b" /><path d="M5.200 5.200l5.600 5.600M10.800 5.200l-5.600 5.600" stroke="#fff" strokeWidth="2" /></svg>
                </div>
              </div>
              <div className="flex min-h-0 flex-1 flex-col border-b border-r border-[#c2c2c2]">
                <ChromeFrame />
                <div className="flex min-h-0 flex-1 overflow-hidden">
                  <GrafanaSidebar />
                  <Dashboard />
                </div>
                <Taskbar />
              </div>
            </div>
          </div>
        </div>
      </div>
    </div>
  );
}
